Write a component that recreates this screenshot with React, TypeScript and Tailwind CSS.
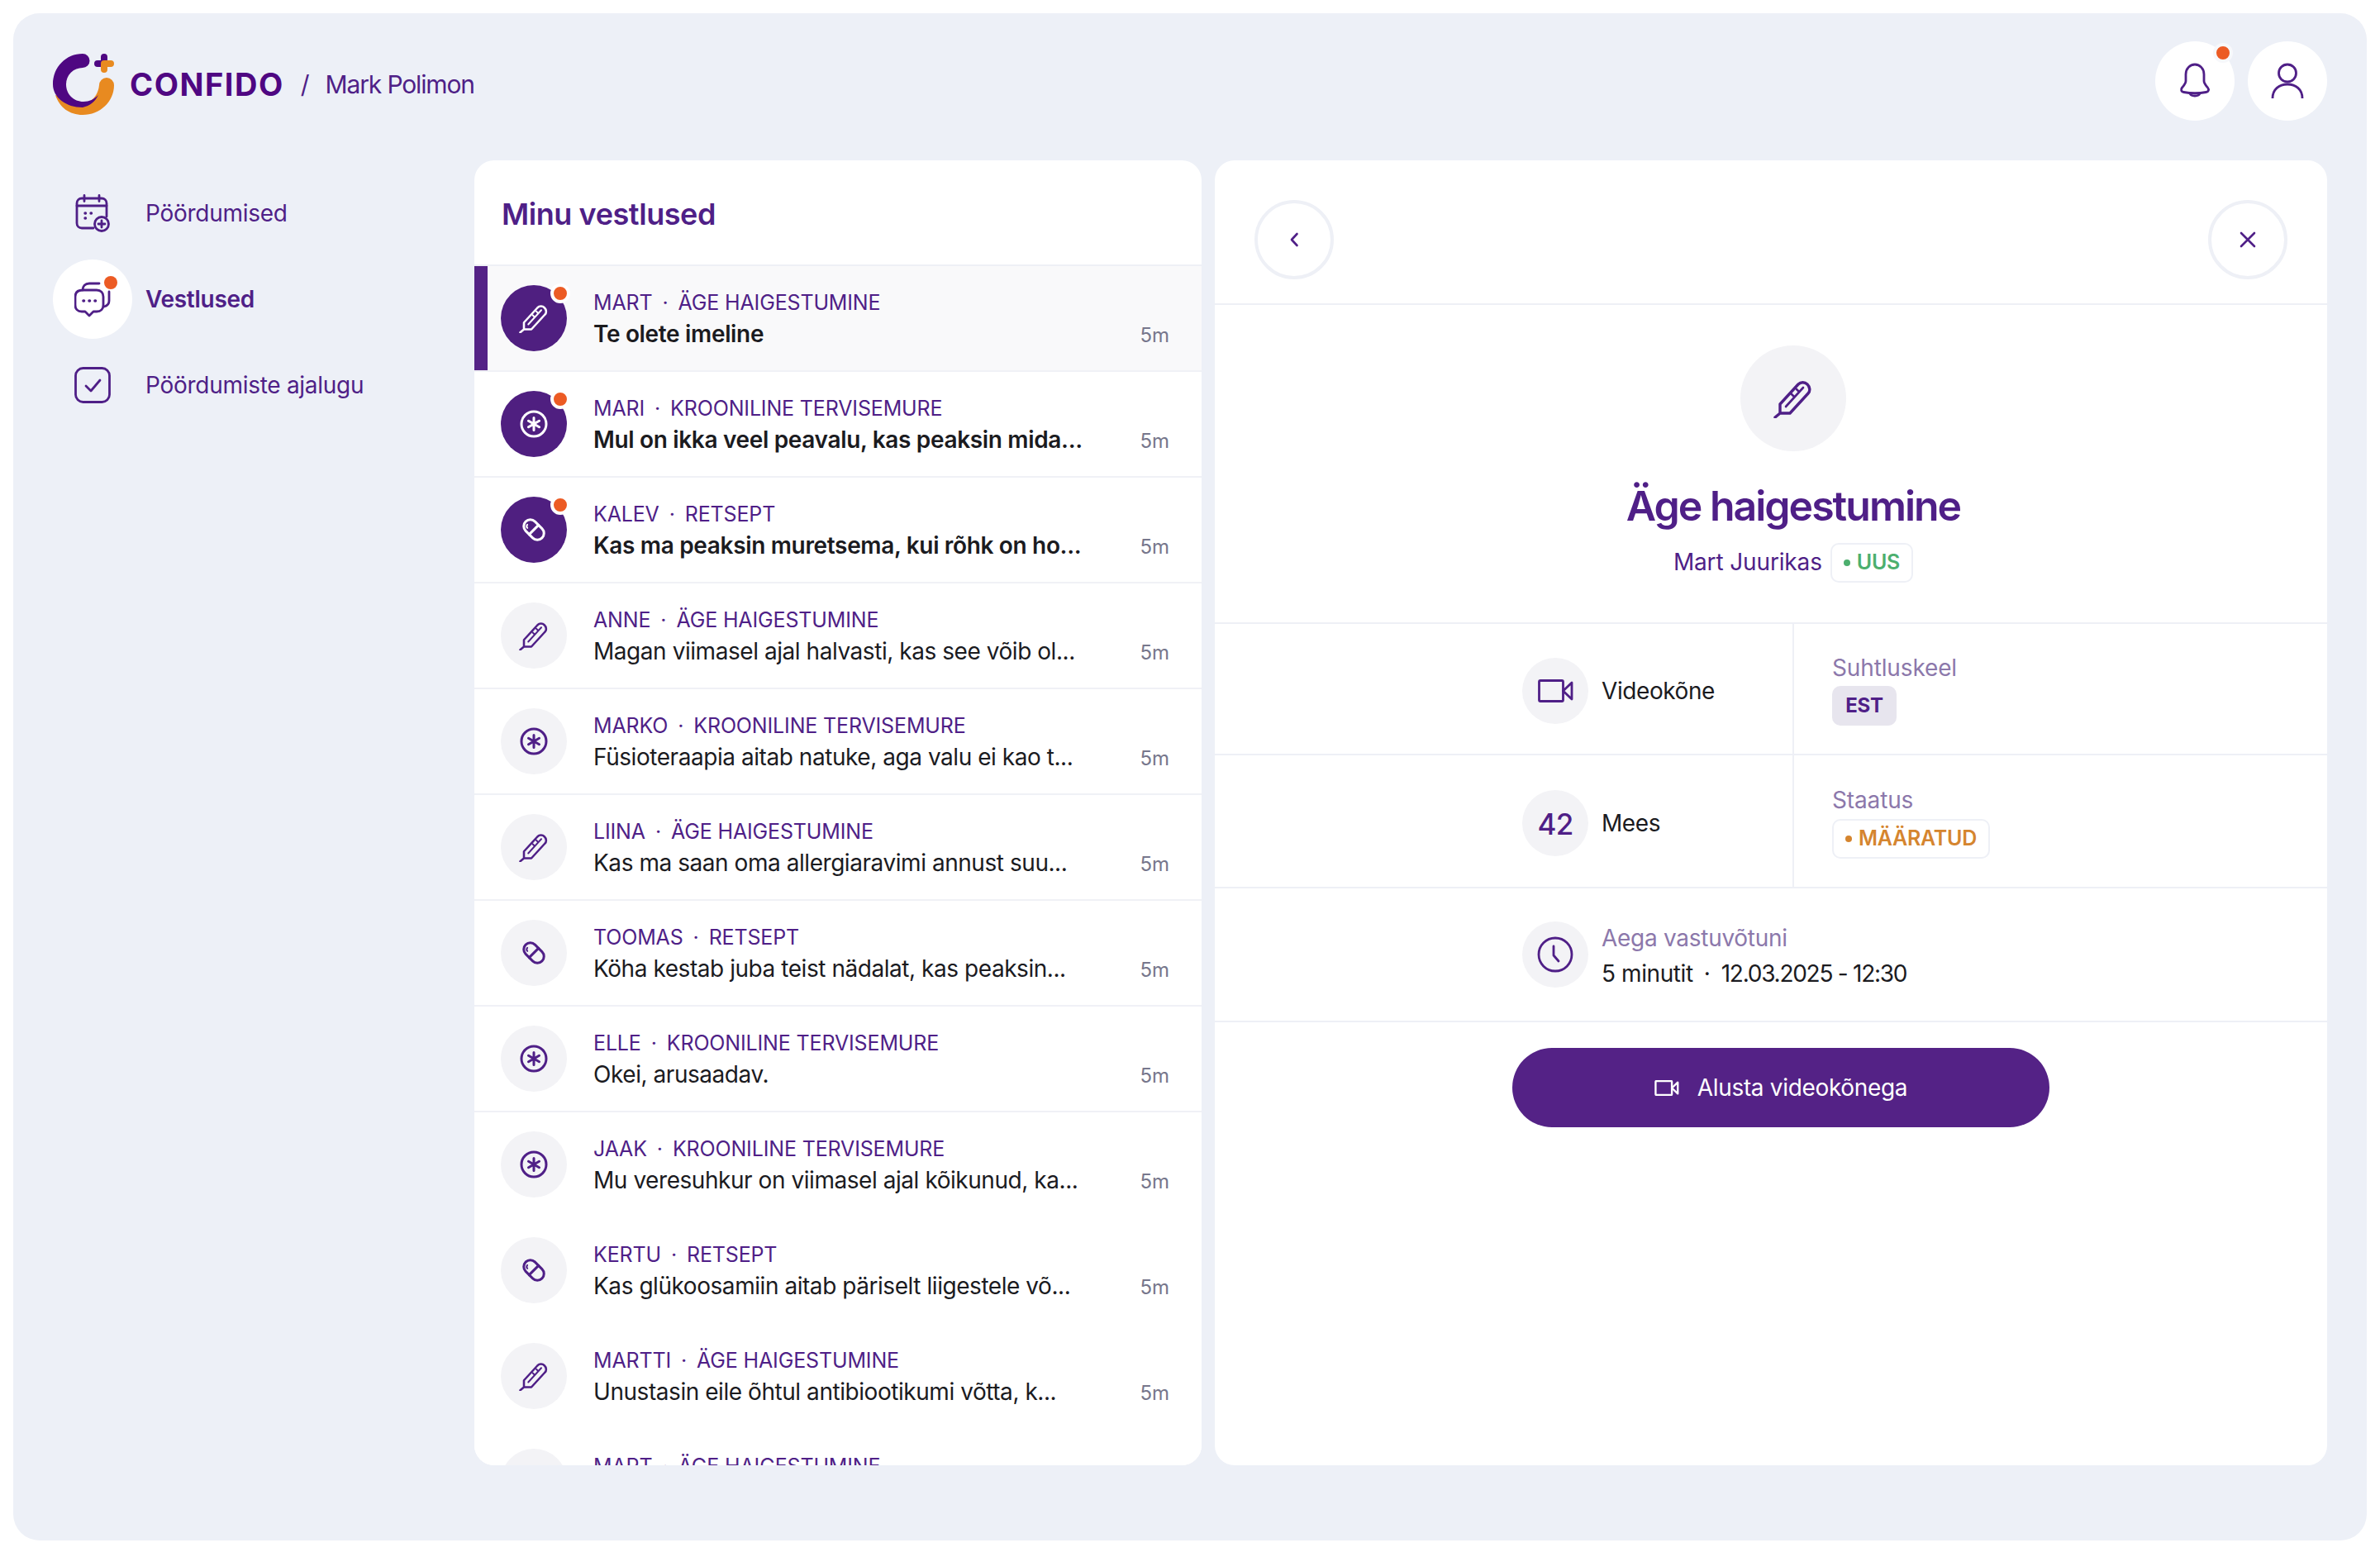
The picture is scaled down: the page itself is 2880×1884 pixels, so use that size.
import React from "react";

type Kind = "temp" | "star" | "pill";

const conversations: { name: string; type: string; kind: Kind; text: string; unread?: boolean }[] = [
  { name: "MART", type: "ÄGE HAIGESTUMINE", kind: "temp", text: "Te olete imeline", unread: true },
  { name: "MARI", type: "KROONILINE TERVISEMURE", kind: "star", text: "Mul on ikka veel peavalu, kas peaksin mida...", unread: true },
  { name: "KALEV", type: "RETSEPT", kind: "pill", text: "Kas ma peaksin muretsema, kui rõhk on ho...", unread: true },
  { name: "ANNE", type: "ÄGE HAIGESTUMINE", kind: "temp", text: "Magan viimasel ajal halvasti, kas see võib ol..." },
  { name: "MARKO", type: "KROONILINE TERVISEMURE", kind: "star", text: "Füsioteraapia aitab natuke, aga valu ei kao t..." },
  { name: "LIINA", type: "ÄGE HAIGESTUMINE", kind: "temp", text: "Kas ma saan oma allergiaravimi annust suu..." },
  { name: "TOOMAS", type: "RETSEPT", kind: "pill", text: "Köha kestab juba teist nädalat, kas peaksin..." },
  { name: "ELLE", type: "KROONILINE TERVISEMURE", kind: "star", text: "Okei, arusaadav." },
  { name: "JAAK", type: "KROONILINE TERVISEMURE", kind: "star", text: "Mu veresuhkur on viimasel ajal kõikunud, ka..." },
  { name: "KERTU", type: "RETSEPT", kind: "pill", text: "Kas glükoosamiin aitab päriselt liigestele võ..." },
  { name: "MARTTI", type: "ÄGE HAIGESTUMINE", kind: "temp", text: "Unustasin eile õhtul antibiootikumi võtta, k..." },
  { name: "MART", type: "ÄGE HAIGESTUMINE", kind: "temp", text: "Te olete imeline" },
];

function Thermometer({ size = 36 }: { size?: number }) {
  return (
    <svg width={size} height={size} viewBox="0 0 48 48" fill="none" stroke="currentColor" strokeWidth="3.400" strokeLinecap="round" strokeLinejoin="round">
      <path d="M2 47l6-5M8 42V31L30 7c3-3 8-3 11 0s4 8 1 11L20 42H8z" />
      <path d="M15 34L36 11M22 19l3 3M28 13l3 3" strokeWidth="2.600" />
    </svg>
  );
}

function StarCircle({ size = 36 }: { size?: number }) {
  return (
    <svg width={size} height={size} viewBox="0 0 36 36" fill="none" stroke="currentColor" strokeLinecap="round">
      <circle cx="18" cy="18" r="15" strokeWidth="3" />
      <path d="M18 10.500v15M11.500 14.200l13 7.600M24.500 14.200l-13 7.600" strokeWidth="3" />
    </svg>
  );
}

function Pill({ size = 36 }: { size?: number }) {
  return (
    <svg width={size} height={size} viewBox="0 0 36 36" fill="none" stroke="currentColor" strokeWidth="3" strokeLinecap="round">
      <g transform="rotate(-45 18 18)">
        <rect x="10" y="4" width="16" height="28" rx="8" />
        <path d="M10 18h16" />
        <path d="M14 11c0-1.500 1-2.800 2.800-3" strokeWidth="2" />
      </g>
    </svg>
  );
}

function KindIcon({ kind }: { kind: Kind }) {
  if (kind === "temp") return <Thermometer />;
  if (kind === "star") return <StarCircle />;
  return <Pill />;
}

function VideoIcon({ w = 43, h = 28, sw = 2.800 }: { w?: number; h?: number; sw?: number }) {
  return (
    <svg width={w} height={h} viewBox="0 0 43 28" fill="none" stroke="currentColor" strokeWidth={sw} strokeLinejoin="round">
      <rect x="1.500" y="1.500" width="29" height="25" rx="1.500" />
      <path d="M30.500 14L41 4v20L30.500 14z" />
    </svg>
  );
}

function Logo() {
  return (
    <svg width="74" height="74" viewBox="0 0 74 74" fill="none">
      <path d="M56 38a9 9 0 0 1 18 0C74 58 57 74 36 74 20 74 8 65 3 50l37 10c10-4 15-12 16-22z" fill="#E88A20" />
      <path d="M36 0a8.500 8.500 0 0 1 0 17A20 20 0 0 0 16 37c0 12 9 21 21 21 7 0 13-3 18-8-4 8-10 13-19 15C16 65 0 53 0 37 0 16 16 0 36 0z" fill="#4F0782" />
      <path d="M54 12h8M62 4v8" stroke="#4F0782" strokeWidth="8" strokeLinecap="round" />
      <path d="M62 12h8M62 12v7" stroke="#E88A20" strokeWidth="8" strokeLinecap="round" />
    </svg>
  );
}

function Dot({ className }: { className: string }) {
  return <span className={`absolute box-content rounded-full bg-[#EC5B24] ${className}`} />;
}

function Chip({ dot, children }: { dot: string; children: React.ReactNode }) {
  return (
    <span className="inline-flex h-[48px] items-center gap-[8px] rounded-[10px] border-2 border-[#EEF0F6] bg-white px-[14px] text-[25px] font-semibold tracking-[-0.01em]">
      <span className={`h-[8px] w-[8px] rounded-full ${dot}`} />
      {children}
    </span>
  );
}

function Round({ children }: { children: React.ReactNode }) {
  return (
    <div className="flex h-[80px] w-[80px] shrink-0 items-center justify-center rounded-full bg-[#F3F3F6] text-[#4F1F87]">
      {children}
    </div>
  );
}

function SideNav() {
  return (
    <nav className="flex w-[510px] shrink-0 flex-col gap-[8px] pt-[16px] text-[28px] tracking-[-0.01em] text-[#4F1F87]">
      <div className="flex h-[96px] items-center gap-[16px]">
        <div className="flex h-[96px] w-[96px] items-center justify-center">
          <svg width="42" height="46" viewBox="0 0 42 46" fill="none" stroke="currentColor" strokeWidth="2.800" strokeLinecap="round" strokeLinejoin="round">
            <path d="M22 41H8c-3.500 0-6-2.500-6-6V11c0-3.500 2.500-6 6-6h24c3.500 0 6 2.500 6 6v16" />
            <path d="M2 14h36M11 1.500v7M29 1.500v7" />
            <circle cx="32" cy="36" r="8.500" />
            <path d="M32 32v8M28 36h8" />
            <path d="M12 23h.5M19 23h.5M12 29h.5" strokeWidth="3.400" />
          </svg>
        </div>
        <span>Pöördumised</span>
      </div>
      <div className="flex h-[96px] items-center gap-[16px] font-semibold">
        <div className="relative flex h-[96px] w-[96px] items-center justify-center rounded-full bg-white">
          <svg width="44" height="46" viewBox="0 0 44 46" fill="none" stroke="currentColor" strokeWidth="2.800" strokeLinecap="round" strokeLinejoin="round">
            <path d="M10 12c0-5 3-8 8-8h12" />
            <path d="M42 14v11c0 4-2 6-6 7" />
            <path d="M10 12h17c5 0 8 3 8 8v10c0 5-3 8-8 8h-4l-5 5-5-5H9c-5 0-8-3-8-8V20c0-5 3-8 9-8z" />
            <path d="M11 25h.5M18 25h.5M25 25h.5" strokeWidth="3.600" />
          </svg>
          <Dot className="left-[62px] top-[20px] h-[16px] w-[16px]" />
        </div>
        <span>Vestlused</span>
      </div>
      <div className="flex h-[96px] items-center gap-[16px]">
        <div className="flex h-[96px] w-[96px] items-center justify-center">
          <svg width="44" height="44" viewBox="0 0 44 44" fill="none" stroke="currentColor" strokeWidth="2.800" strokeLinecap="round" strokeLinejoin="round">
            <rect x="1.500" y="1.500" width="41" height="41" rx="9" />
            <path d="M14 23l6 6 11-13" />
          </svg>
        </div>
        <span>Pöördumiste ajalugu</span>
      </div>
    </nav>
  );
}

function ConversationList() {
  return (
    <section className="h-[1579px] w-[880px] shrink-0 overflow-hidden rounded-[24px] bg-white">
      <div className="flex h-[128px] items-center border-b-2 border-[#EEF0F6] pl-[33px] pt-[4px] text-[36px] font-semibold tracking-[-0.012em] text-[#4F1F87]">
        Minu vestlused
      </div>
      {conversations.map((c, i) => (
        <div
          key={i}
          className={`relative flex h-[128px] items-center border-b-2 pl-[32px] pr-[39px] ${i < 8 ? "border-[#F0F1F6]" : "border-transparent"} ${i === 0 ? "bg-[#F9F9FA]" : "bg-white"}`}
        >
          {i === 0 && <span className="absolute inset-y-0 left-0 w-[16px] bg-[#542286]" />}
          <div className={`relative flex h-[80px] w-[80px] shrink-0 items-center justify-center rounded-full ${c.unread ? "bg-[#4F1F80] text-white" : "bg-[#F3F3F6] text-[#4F1F87]"}`}>
            <KindIcon kind={c.kind} />
            {c.unread && <Dot className="left-[60px] top-[-2px] h-[16px] w-[16px] border-4 border-white" />}
          </div>
          <div className="ml-[32px] min-w-0 flex-1 pt-[2px]">
            <div className="text-[25px] leading-[32px] tracking-[-0.006em] text-[#4F1F87]">
              {c.name}<span className="mx-[12px]">·</span>{c.type}
            </div>
            <div className={`mt-[4px] whitespace-nowrap text-[28px] leading-[36px] text-[#1B1B1F] ${c.unread ? "font-semibold tracking-[-0.012em]" : "tracking-[-0.016em]"}`}>
              {c.text}
            </div>
          </div>
          <span className="mt-[42px] text-[24px] text-[#77778C]">5m</span>
        </div>
      ))}
    </section>
  );
}

function Detail() {
  return (
    <section className="ml-[16px] h-[1579px] w-[1346px] shrink-0 overflow-hidden rounded-[24px] bg-white">
      <div className="flex h-[175px] items-start justify-between border-b-2 border-[#EEF0F6] px-[48px] pt-[48px] text-[#4F1F87]">
        <button className="flex h-[96px] w-[96px] items-center justify-center rounded-full border-4 border-[#EEF0F6]">
          <svg width="12" height="18" viewBox="0 0 12 18" fill="none" stroke="currentColor" strokeWidth="2.600" strokeLinecap="round" strokeLinejoin="round">
            <path d="M9.500 2L3 9l6.500 7" />
          </svg>
        </button>
        <button className="flex h-[96px] w-[96px] items-center justify-center rounded-full border-4 border-[#EEF0F6]">
          <svg width="20" height="20" viewBox="0 0 20 20" fill="none" stroke="currentColor" strokeWidth="2.600" strokeLinecap="round">
            <path d="M2 2l16 16M18 2L2 18" />
          </svg>
        </button>
      </div>

      <div className="flex h-[386px] flex-col items-center border-b-2 border-[#EEF0F6] pl-[54px] pt-[49px]">
        <div className="flex h-[128px] w-[128px] items-center justify-center rounded-full bg-[#F3F3F6] text-[#4F1F87]">
          <Thermometer size={48} />
        </div>
        <h1 className="mt-[34px] text-[50px] font-semibold leading-[64px] tracking-[-0.04em] text-[#4F1F87]">Äge haigestumine</h1>
        <div className="mt-[10px] flex items-center gap-[10px] text-[28px] tracking-[-0.005em] text-[#4F1F87]">
          Mart Juurikas
          <span className="text-[#4CAF6E]"><Chip dot="bg-[#4CAF6E]">UUS</Chip></span>
        </div>
      </div>

      <div className="grid h-[159px] grid-cols-[701px_1fr] border-b-2 border-[#EEF0F6]">
        <div className="flex items-center gap-[16px] border-r-2 border-[#EEF0F6] pl-[372px] pt-[4px] text-[28px] tracking-[-0.015em] text-[#1B1B1F]">
          <Round><VideoIcon /></Round>
          Videokõne
        </div>
        <div className="pl-[46px] pt-[35px]">
          <div className="text-[28px] leading-[36px] tracking-[-0.005em] text-[#8C78AB]">Suhtluskeel</div>
          <span className="mt-[4px] flex h-[48px] w-[78px] items-center justify-center rounded-[10px] bg-[#E7E5EE] text-[24px] font-bold tracking-[-0.01em] text-[#4F1F87]">EST</span>
        </div>
      </div>

      <div className="grid h-[161px] grid-cols-[701px_1fr] border-b-2 border-[#EEF0F6]">
        <div className="flex items-center gap-[16px] border-r-2 border-[#EEF0F6] pl-[372px] pt-[4px] text-[28px] tracking-[-0.015em] text-[#1B1B1F]">
          <Round><span className="pt-[3px] text-[35px] font-medium tracking-[-0.02em]">42</span></Round>
          Mees
        </div>
        <div className="pl-[46px] pt-[36px]">
          <div className="text-[28px] leading-[36px] tracking-[-0.005em] text-[#8C78AB]">Staatus</div>
          <div className="mt-[5px] text-[#D5852F]"><Chip dot="bg-[#D5852F]">MÄÄRATUD</Chip></div>
        </div>
      </div>

      <div className="flex h-[162px] items-center gap-[16px] border-b-2 border-[#EEF0F6] pl-[372px]">
        <Round>
          <svg width="44" height="44" viewBox="0 0 44 44" fill="none" stroke="currentColor" strokeWidth="2.800" strokeLinecap="round" strokeLinejoin="round">
            <circle cx="22" cy="22" r="20" />
            <path d="M20 12v11l6 7" />
          </svg>
        </Round>
        <div className="pt-[2px]">
          <div className="text-[28px] leading-[36px] tracking-[-0.01em] text-[#8C78AB]">Aega vastuvõtuni</div>
          <div className="mt-[7px] flex text-[28px] leading-[36px] text-[#1B1B1F]">
            <span className="tracking-[-0.015em]">5 minutit</span>
            <span className="mx-[13px]">·</span>
            <span className="tracking-[-0.045em]">12.03.2025 - 12:30</span>
          </div>
        </div>
      </div>

      <button className="ml-[360px] mt-[31px] flex h-[96px] w-[650px] items-center justify-center gap-[22px] rounded-full bg-[#542286] text-[28px] tracking-[-0.012em] text-white">
        <VideoIcon w={30} h={19} sw={3.500} />
        Alusta videokõnega
      </button>
    </section>
  );
}

export default function App() {
  return (
    <div className="h-[1884px] bg-white p-[16px] font-['Inter',sans-serif]">
      <div className="flex h-[1848px] flex-col rounded-[32px] bg-[#EDF0F7] px-[48px] pt-[34px]">
        <header className="flex h-[96px] items-center justify-between">
          <div className="flex items-center pt-[8px] text-[#4F1F87]">
            <Logo />
            <span className="ml-[19px] text-[38px] font-bold tracking-[0.04em] text-[#4F0782]">CONFIDO</span>
            <span className="ml-[20px] text-[30px]">/</span>
            <span className="ml-[19px] text-[30px] tracking-[-0.038em]">Mark Polimon</span>
          </div>
          <div className="flex gap-[16px] text-[#4F1F87]">
            <div className="relative flex h-[96px] w-[96px] items-center justify-center rounded-full bg-white">
              <svg width="38" height="44" viewBox="0 0 38 44" fill="none" stroke="currentColor" strokeWidth="2.800" strokeLinejoin="round">
                <path d="M19 2c-6 0-11 5-11 12v8c0 3-2 5-4.500 8-2 2.500-1 5 2 5.500 8 1.500 19 1.500 27 0 3-.5 4-3 2-5.500C32 27 30 25 30 22v-8C30 7 25 2 19 2z" />
                <path d="M13 37c1 4 11 4 12 0" />
              </svg>
              <Dot className="left-[70px] top-[2px] h-[16px] w-[16px] border-4 border-[#F7F8FB]" />
            </div>
            <div className="flex h-[96px] w-[96px] items-center justify-center rounded-full bg-white">
              <svg width="40" height="44" viewBox="0 0 40 44" fill="none" stroke="currentColor" strokeWidth="2.800" strokeLinecap="butt">
                <circle cx="20" cy="12.500" r="10.500" />
                <path d="M2 43c0-11 8-17 18-17s18 6 18 17" />
              </svg>
            </div>
          </div>
        </header>
        <main className="mt-[48px] flex items-start">
          <SideNav />
          <ConversationList />
          <Detail />
        </main>
      </div>
    </div>
  );
}
